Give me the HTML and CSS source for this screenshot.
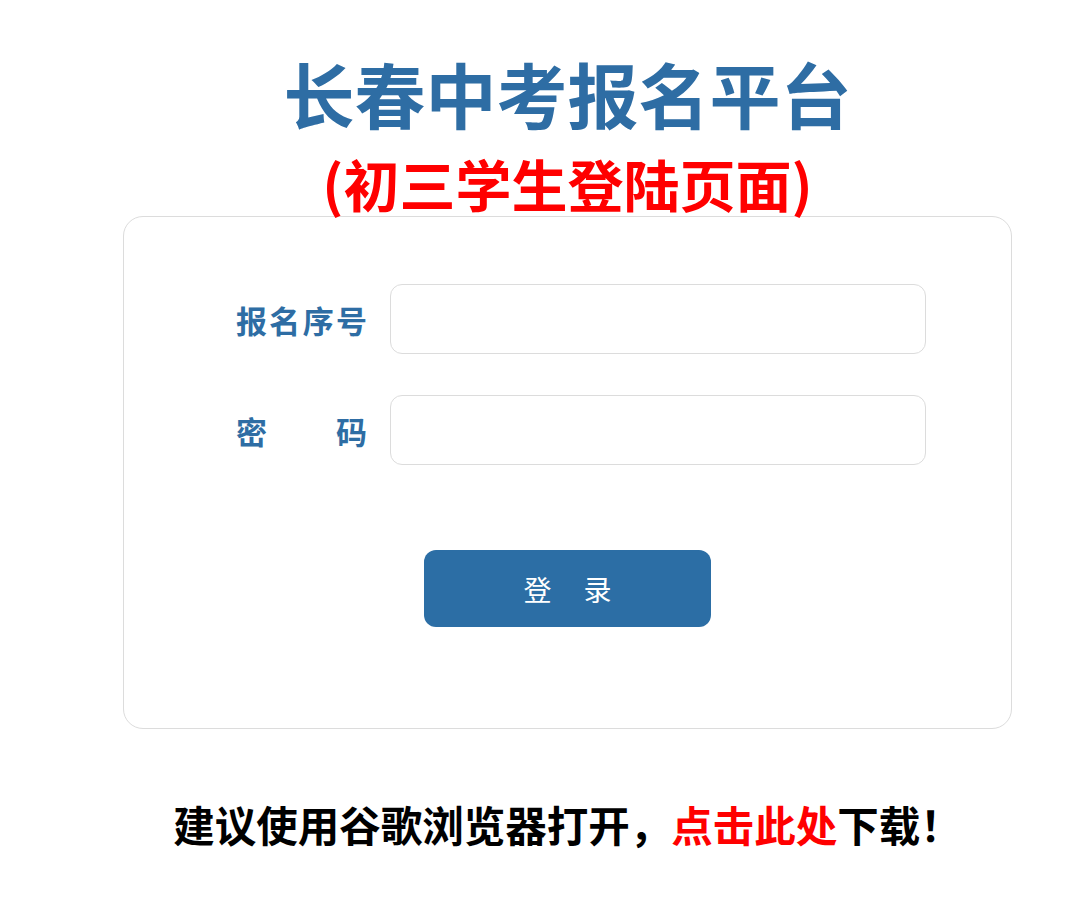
FILE: index.html
```html
<!DOCTYPE html>
<html lang="zh-CN">
<head>
<meta charset="utf-8">
<title>长春中考报名平台</title>
<link rel="stylesheet" href="styles.css">
</head>
<body>
<div class="page">
  <h1 class="title">长春中考报名平台</h1>
  <h2 class="subtitle">(初三学生登陆页面)</h2>
  <form class="card">
    <div class="row">
      <label class="label">报名序号</label>
      <input class="field" type="text">
    </div>
    <div class="row">
      <label class="label">密码</label>
      <input class="field" type="password">
    </div>
    <div class="actions">
      <button class="btn" type="button">登<span class="sp"></span>录</button>
    </div>
  </form>
  <p class="tip">建议使用谷歌浏览器打开，<a class="link">点击此处</a>下载！</p>
</div>
</body>
</html>
```
FILE: styles.css
```css
html, body {
  margin: 0;
  padding: 0;
  background: #fff;
}
body {
  font-family: "Noto Sans CJK SC", "Noto Sans", sans-serif;
}
.page {
  width: 889px;
  margin-left: 123px;
  padding-top: 52px;
}
.title {
  margin: 0;
  font-size: 71px;
  line-height: 80px;
  font-weight: 700;
  color: #2e6da4;
  text-align: center;
}
.subtitle {
  margin: 21px 0 0;
  font-size: 56px;
  line-height: 60px;
  font-weight: 700;
  color: #ff0000;
  text-align: center;
  font-family: "Noto Sans CJK SC", sans-serif;
}
.card {
  box-sizing: border-box;
  margin-top: 3px;
  height: 513px;
  border: 1px solid #dcdcdc;
  border-radius: 20px;
  padding: 67px 85px 0 112px;
  display: flex;
  flex-direction: column;
  gap: 41px;
}
.row {
  display: flex;
  align-items: center;
  gap: 23px;
}
.label {
  width: 131px;
  font-size: 31px;
  font-weight: 700;
  color: #2e6da4;
  text-align: justify;
  text-align-last: justify;
  white-space: nowrap;
}
.field {
  box-sizing: border-box;
  width: 536px;
  height: 70px;
  border: 1px solid #dcdcdc;
  border-radius: 12px;
  outline: none;
  font-size: 28px;
  padding: 0 14px;
}
.actions {
  display: flex;
  justify-content: center;
  margin-top: 44px;
  margin-left: -112px;
  margin-right: -85px;
}
.btn {
  width: 287px;
  height: 77px;
  border: none;
  border-radius: 12px;
  background: #2c6ea5;
  color: #fff;
  font-family: "Noto Sans CJK SC", sans-serif;
  font-size: 28px;
  display: flex;
  align-items: center;
  justify-content: center;
  padding: 0;
}
.sp {
  display: inline-block;
  width: 32px;
}
.tip {
  margin: 65px 0 0 0;
  font-size: 41.5px;
  line-height: 60px;
  font-weight: 700;
  color: #000;
  text-align: center;
  white-space: nowrap;
}
.link {
  color: #ff0000;
}
```
